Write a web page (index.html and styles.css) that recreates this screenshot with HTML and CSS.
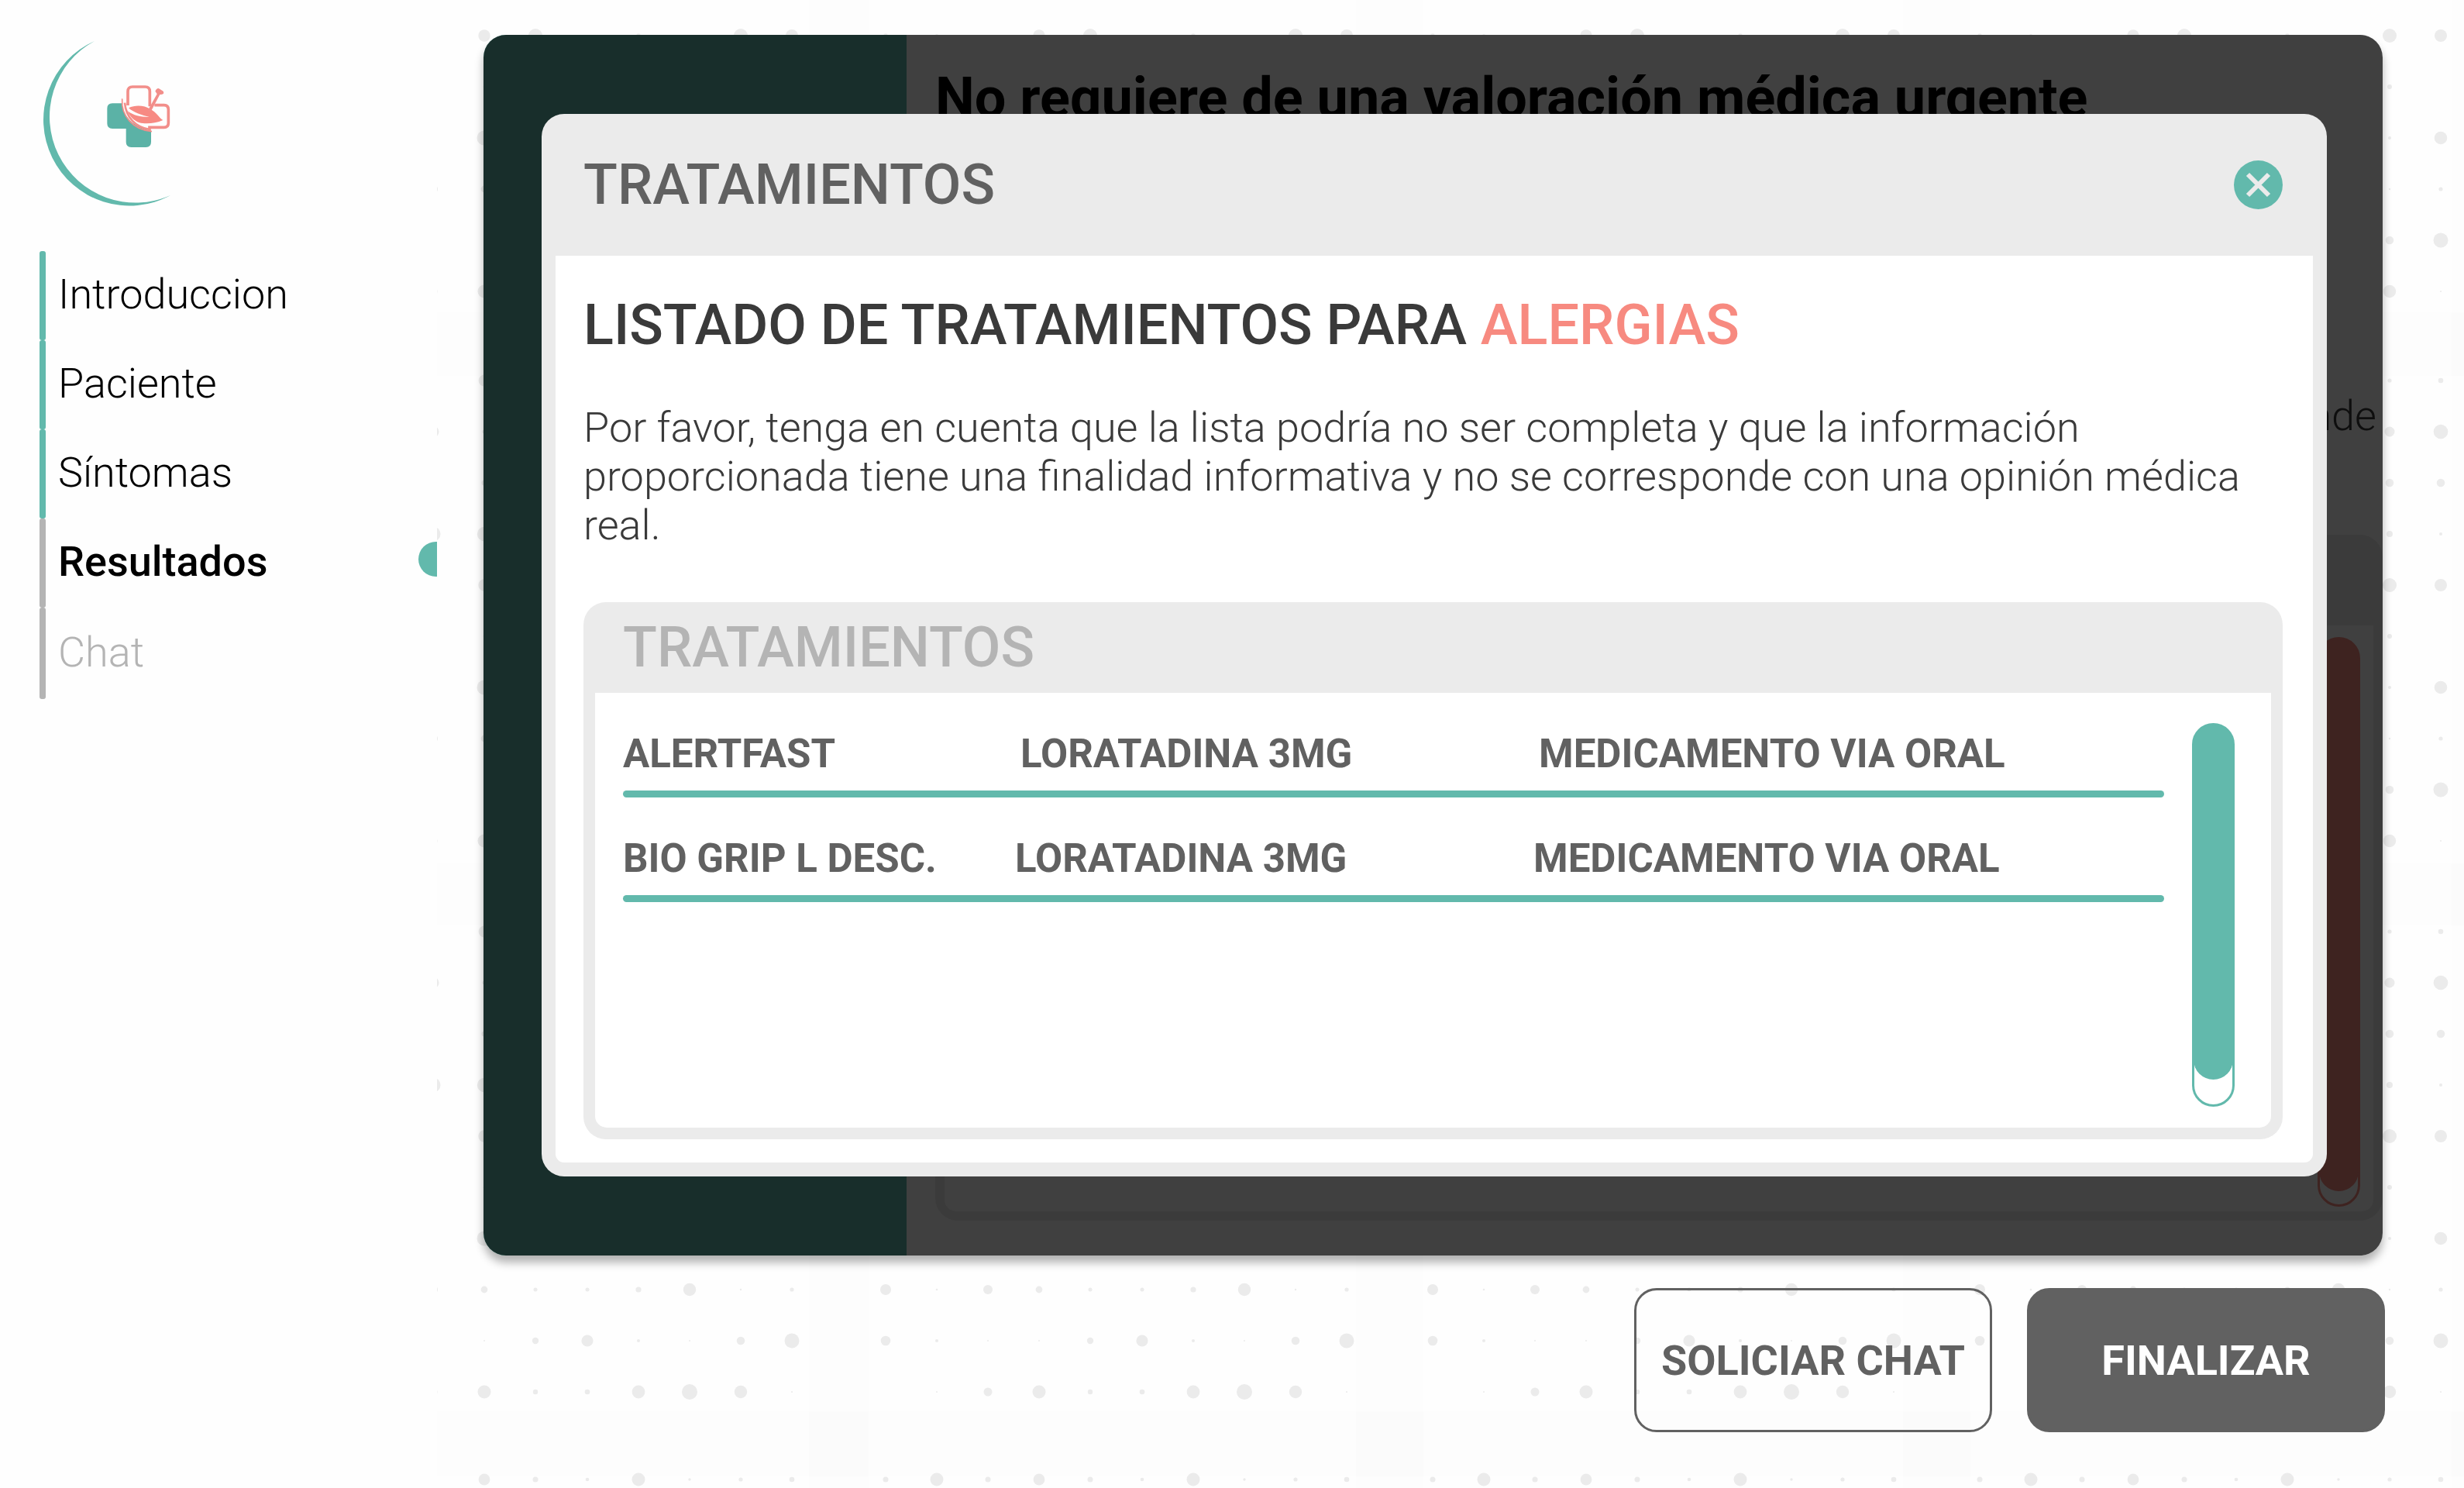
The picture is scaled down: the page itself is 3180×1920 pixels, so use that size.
FILE: index.html
```html
<!DOCTYPE html>
<html lang="es">
<head>
  <meta charset="utf-8">
  <title>Resultados - Tratamientos</title>
  <link rel="stylesheet" href="styles.css">
</head>
<body>
  <aside class="sidebar">
    <svg class="logo" viewBox="50 45 180 225" aria-label="Logo" role="img">
      <path fill="#62b9ac" d="M122 53A111 111 0 1 0 220 252A111 111 0 0 1 122 53Z"/>
      <g transform="translate(120 100) scale(.3333)">
        <path fill="#5bb2a6" d="M75 100H112C116 150 158 194 225 206V250Q225 270 205 270H148Q128 270 128 250V198H75Q55 198 55 178V120Q55 100 75 100Z"/>
        <g fill="none" stroke="#f28e8a" stroke-width="11">
          <path d="M135 108V54Q135 36 153 36H202Q220 36 220 54V112"/>
          <path d="M238 107H275Q292 107 292 124V176Q292 193 275 193H219V206"/>
          <path stroke-width="5" d="M113 82C108 150 155 202 228 209"/>
          <path stroke-width="8" d="M123 98C128 155 165 193 219 201"/>
        </g>
        <path fill="#f78a83" d="M138 118C165 104 200 108 222 122C246 134 256 156 271 165C240 180 200 180 180 175C158 168 142 150 134 130C158 148 190 154 218 153C190 146 158 136 138 118Z"/>
        <path fill="#f28e8a" d="M212 128L248 64L241 53Q248 38 258 44L272 53Q278 64 264 66L259 66L224 132Z"/>
      </g>
    </svg>
    <nav class="steps">
      <a class="step step-done" href="#introduccion">Introduccion</a>
      <a class="step step-done" href="#paciente">Paciente</a>
      <a class="step step-done" href="#sintomas">Síntomas</a>
      <a class="step step-current" href="#resultados">Resultados</a>
      <a class="step step-pending" href="#chat">Chat</a>
    </nav>
  </aside>

  <main class="main">
    <svg class="dots" aria-hidden="true">
      <defs>
        <g id="tile">
          <rect x="-99" y="-88" width="793" height="791" fill="#000" fill-opacity=".004"/>
          <g fill="#ebebeb">
            <g><circle cx="0" r="3.5"/><circle cx="66" r="8.5"/><circle cx="132" r="3.5"/><circle cx="198" r="7.4"/><circle cx="264" r="3.5"/><circle cx="331" r="2.3"/><circle cx="397" r="8.5"/><circle cx="463" r="1.7"/><circle cx="529" r="2.6"/><circle cx="595" r="3.3"/></g>
            <g transform="translate(0 66)"><circle cx="132" r="7.5"/><circle cx="198" r="2.5"/><circle cx="529" r="6.5"/><circle cx="595" r="9.3"/></g>
            <g transform="translate(0 132)"><circle cx="132" r="1"/><circle cx="198" r="3.5"/><circle cx="529" r="5.3"/><circle cx="595" r="5.3"/></g>
            <g transform="translate(0 198)"><circle cx="132" r="9.5"/><circle cx="198" r="9.2"/><circle cx="529" r="4"/><circle cx="595" r="2"/></g>
            <g transform="translate(0 264)"><circle cx="0" r="2.7"/><circle cx="66" r="2"/><circle cx="198" r="7.7"/><circle cx="264" r="9"/><circle cx="331" r="1"/><circle cx="397" r="2.7"/><circle cx="463" r="1"/><circle cx="529" r="9"/><circle cx="595" r="8"/></g>
            <g transform="translate(0 330)"><circle cx="198" r="1.3"/><circle cx="529" r="3"/></g>
            <g transform="translate(0 396)"><circle cx="132" r="1"/><circle cx="198" r="9.5"/><circle cx="529" r="2"/><circle cx="595" r="8.3"/></g>
            <g transform="translate(0 462)"><circle cx="0" r="7"/><circle cx="66" r="1.3"/><circle cx="132" r="6"/><circle cx="198" r="4.4"/><circle cx="264" r="2.5"/><circle cx="331" r="2.5"/><circle cx="397" r="3.6"/><circle cx="463" r="8.2"/><circle cx="529" r="1.2"/><circle cx="595" r="2.6"/></g>
            <g transform="translate(0 528)"><circle cx="0" r="6.3"/><circle cx="66" r="2"/><circle cx="132" r="1"/><circle cx="198" r="1"/><circle cx="264" r="4.2"/><circle cx="331" r="7.6"/><circle cx="397" r="2"/><circle cx="463" r="1"/><circle cx="529" r="5.3"/><circle cx="595" r="9.5"/></g>
            <g transform="translate(0 594)"><circle cx="66" r="1"/><circle cx="132" r="5.5"/><circle cx="198" r="8.5"/><circle cx="264" r="3.2"/><circle cx="331" r="3.3"/><circle cx="397" r="8.4"/><circle cx="463" r="10"/><circle cx="529" r="8.2"/><circle cx="595" r="1.1"/></g>
          </g>
        </g>
        <g id="tile-row">
          <use href="#tile" x="-137"/><use href="#tile" x="579"/><use href="#tile" x="1285"/><use href="#tile" x="1991"/><use href="#tile" x="2699"/>
        </g>
      </defs>
      <use href="#tile-row" y="-218"/>
      <use href="#tile-row" y="491"/>
      <use href="#tile-row" y="1202"/>
      <use href="#tile-row" y="1909"/>
    </svg>

    <section class="panel">
      <div class="panel-side"></div>
      <div class="panel-content">
        <h1 class="panel-title">No requiere de una valoración médica urgente</h1>
        <p class="panel-text">nde</p>
        <div class="card card-results">
          <div class="card-head"></div>
          <div class="card-body">
            <div class="scroll scroll-coral"><div class="scroll-thumb"></div></div>
          </div>
        </div>
      </div>

      <div class="overlay">
        <div class="modal" role="dialog" aria-labelledby="modal-title">
          <header class="modal-head">
            <h2 class="heading heading-gray" id="modal-title">TRATAMIENTOS</h2>
            <button class="close" type="button" aria-label="Cerrar">
              <svg viewBox="0 0 63 63"><path d="M18 18L45 45M45 18L18 45" stroke="#ebebeb" stroke-width="6"/></svg>
            </button>
          </header>
          <div class="modal-body">
            <h3 class="heading">LISTADO DE TRATAMIENTOS PARA <span class="accent">ALERGIAS</span></h3>
            <p class="notice">Por favor, tenga en cuenta que la lista podría no ser completa y que la información proporcionada tiene una finalidad informativa y no se corresponde con una opinión médica real.</p>
            <section class="card card-treatments">
              <div class="card-head"><h4 class="heading heading-light">TRATAMIENTOS</h4></div>
              <div class="card-body">
                <table class="treatments">
                  <tbody>
                    <tr class="treatment"><td>ALERTFAST</td><td>LORATADINA 3MG</td><td>MEDICAMENTO VIA ORAL</td></tr>
                    <tr class="treatment treatment-long"><td>BIO GRIP L DESC.</td><td>LORATADINA 3MG</td><td>MEDICAMENTO VIA ORAL</td></tr>
                  </tbody>
                </table>
                <div class="scroll"><div class="scroll-thumb"></div></div>
              </div>
            </section>
          </div>
        </div>
      </div>
    </section>

    <div class="actions">
      <button class="btn btn-outline" type="button">SOLICIAR CHAT</button>
      <button class="btn btn-solid" type="button">FINALIZAR</button>
    </div>
  </main>
</body>
</html>
```
FILE: styles.css
```css
:root {
  --teal: #62b9ac;
  --coral: #f78a80;
  --gray: #616161;
  --silver: #b4b4b4;
  --mist: #ebebeb;
  --ink: #3a3a3a;
  --radius: 29px;
}

* {
  box-sizing: border-box;
  margin: 0;
  padding: 0;
}

body {
  display: flex;
  min-height: 100vh;
  background: #fff;
  color: var(--ink);
  font-family: Roboto, sans-serif;
  font-size: 54px;
}

/* Sidebar */
.sidebar {
  flex: 0 0 564px;
  padding: 45px 0 0 50px;
  background: #fefefe;
}

.logo {
  display: block;
  width: 180px;
  height: 225px;
}

.steps {
  display: flex;
  flex-direction: column;
  margin-top: 54px;
}

.step {
  position: relative;
  display: flex;
  align-items: center;
  height: 115px;
  padding: 0 0 4px 25px;
  color: #000;
  font-weight: 300;
  text-decoration: none;
}

.step::before {
  content: "";
  position: absolute;
  left: 1px;
  top: 0;
  bottom: 0;
  width: 8px;
  border-radius: 3px;
  background: var(--silver);
}

.step-done::before {
  background: var(--teal);
}

.step-current {
  font-weight: 500;
}

.step-current::after {
  content: "";
  position: absolute;
  right: 0;
  top: 30px;
  width: 24px;
  height: 45px;
  border-radius: 23px 0 0 23px;
  background: var(--teal);
}

.step-pending {
  height: 118px;
  color: var(--silver);
}

/* Main area */
.main {
  position: relative;
  flex: 1;
  display: flex;
  flex-direction: column;
  gap: 42px;
  padding: 45px 102px 72px 60px;
}

.dots {
  position: absolute;
  inset: 0;
  width: 100%;
  height: 100%;
}

.panel {
  position: relative;
  flex: 1;
  display: flex;
  margin-right: 3px;
  border-radius: var(--radius);
  background: #fff;
  box-shadow: 0 9px 12px rgba(0, 0, 0, .3);
  overflow: hidden;
}

.panel-side {
  flex: 0 0 546px;
  background: var(--teal);
}

.panel-content {
  flex: 1;
  display: flex;
  flex-direction: column;
  padding: 40px 0 45px 37px;
}

.panel-title {
  color: #000;
  font-size: 72px;
  font-weight: 700;
  line-height: 84px;
}

.panel-text {
  margin-top: 336px;
  padding-right: 8px;
  font-weight: 300;
  line-height: 63px;
  text-align: right;
}

.overlay {
  position: absolute;
  inset: 0;
  display: flex;
  padding: 102px 72px 102px 75px;
  background: rgba(0, 0, 0, .75);
}

/* Modal */
.modal {
  flex: 1;
  display: flex;
  flex-direction: column;
  padding: 0 18px 18px;
  border-radius: var(--radius);
  background: var(--mist);
}

.modal-head {
  display: flex;
  align-items: center;
  justify-content: space-between;
  height: 183px;
  padding: 0 39px 0 36px;
}

.modal-body {
  flex: 1;
  display: flex;
  flex-direction: column;
  padding: 45px 39px 30px 36px;
  border-radius: 0 0 11px 11px;
  background: #fff;
}

.heading {
  color: var(--ink);
  font-size: 72px;
  font-weight: 500;
  line-height: 90px;
}

.heading-gray {
  color: var(--gray);
}

.heading-light {
  color: var(--silver);
}

.accent {
  color: var(--coral);
}

.close {
  width: 63px;
  height: 63px;
  border: 0;
  border-radius: 50%;
  background: var(--teal);
}

.close svg {
  display: block;
}

.notice {
  margin: 55px 0 68px;
  font-weight: 300;
  line-height: 63px;
}

/* Cards */
.card {
  display: flex;
  flex-direction: column;
  flex: 1;
  padding: 0 15px 15px;
  border-radius: var(--radius);
  background: var(--mist);
}

.card-head {
  display: flex;
  align-items: center;
  height: 117px;
  padding-left: 36px;
}

.card-body {
  flex: 1;
  display: flex;
  gap: 36px;
  padding: 39px 47px 27px 36px;
  border-radius: 0 0 15px 15px;
  background: #fff;
}

.card-results {
  margin-top: 122px;
  padding: 0 12px 12px;
}

.card-results .card-body {
  justify-content: flex-end;
  padding: 15px 17px 6px;
}

.scroll {
  flex: 0 0 55px;
  padding-bottom: 33px;
  border: 3px solid var(--teal);
  border-radius: 28px;
}

.scroll-thumb {
  height: 100%;
  border-radius: 25px;
  background: var(--teal);
  box-shadow: 0 0 0 1px var(--teal);
}

.scroll-coral {
  padding-bottom: 18px;
  border-color: var(--coral);
}

.scroll-coral .scroll-thumb {
  background: var(--coral);
  box-shadow: 0 0 0 1px var(--coral);
}

/* Treatments table */
.treatments {
  flex: 1;
  display: block;
  padding-top: 10px;
  color: var(--gray);
  font-size: 51px;
  font-weight: 700;
  line-height: 60px;
}

.treatments tbody {
  display: flex;
  flex-direction: column;
  gap: 49px;
}

.treatment {
  display: grid;
  grid-template-columns: 513px 669px 1fr;
  row-gap: 17px;
}

.treatment-long {
  grid-template-columns: 506px 669px 1fr;
}

.treatment::after {
  content: "";
  grid-column: 1 / -1;
  height: 9px;
  border-radius: 5px;
  background: var(--teal);
}

/* Actions */
.actions {
  position: relative;
  display: flex;
  justify-content: flex-end;
  gap: 45px;
}

.btn {
  width: 462px;
  height: 186px;
  border: 3px solid var(--gray);
  border-radius: var(--radius);
  font: 700 54px/63px Roboto, sans-serif;
}

.btn-outline {
  background: transparent;
  color: var(--gray);
}

.btn-solid {
  background: var(--gray);
  color: #fff;
}
```
